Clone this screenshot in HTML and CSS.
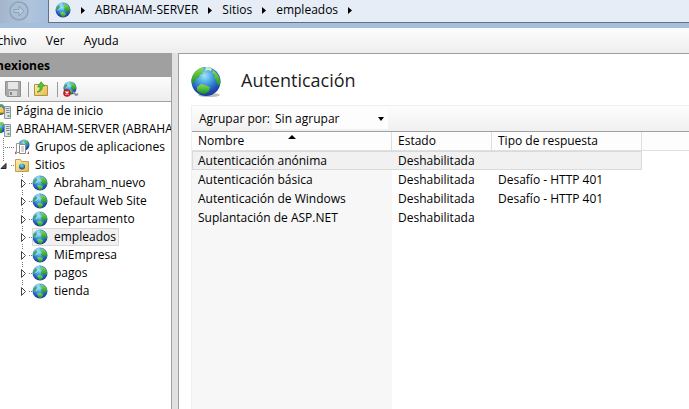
FILE: index.html
```html
<!DOCTYPE html>
<html lang="es">
<head>
<meta charset="utf-8">
<title>Autenticación</title>
<link rel="stylesheet" href="styles.css">
</head>
<body>
<svg class="defs" aria-hidden="true">
  <defs>
    <radialGradient id="sea" cx=".45" cy=".3" r=".75">
      <stop offset="0" stop-color="#9fe4fb"/><stop offset=".35" stop-color="#4aa6e2"/><stop offset=".7" stop-color="#2358c0"/><stop offset="1" stop-color="#1c2f8c"/>
    </radialGradient>
    <linearGradient id="land" x2="0" y2="1"><stop offset="0" stop-color="#8fdc4c"/><stop offset="1" stop-color="#159426"/></linearGradient>
    <linearGradient id="folder" x2="1" y2="1"><stop offset="0" stop-color="#fff2ae"/><stop offset="1" stop-color="#e2b94b"/></linearGradient>
    <symbol id="globe-large" viewBox="0 0 32 32">
      <ellipse cx="18" cy="29" rx="11" ry="2" fill="#000" opacity=".25"/>
      <circle cx="15" cy="15.500" r="14.500" fill="url(#sea)"/>
      <path d="M2 9C4 5 8 2 12 1.500l1 2-2 2 1 2-3 1-1 3-3 1-1 3-2 2-1.500-1C0 14 1 11 2 9z" fill="url(#land)"/>
      <path d="M15 1c3 0 5 1 6 2l-1 2-3-1-3 1z" fill="#c9f0c4"/>
      <path d="M22 4c4 3 7 7 7.500 12L28 20l-2-2-1-4-2-2 1-3-3-2z" fill="url(#land)"/>
      <path d="M6 21l4-3 4 1 2 1 3 1-1 4-4 3-5-1-3-3z" fill="url(#land)"/>
    </symbol>
    <symbol id="globe" viewBox="0 0 16 16">
      <circle cx="8" cy="8" r="7.500" fill="url(#sea)"/>
      <path d="M1.500 5C3 2 5 1 7.500.800l.5 1.700L6 4l.5 2-2 2L2 8.500z" fill="#a5def2" opacity=".7"/>
      <path d="M1 6l3-3 1 2-2 3H1z" fill="#3fa564"/>
      <path d="M9 1.500c3 .5 5 2.500 6 5L14.500 10l-2-1-1 1L9 8l1-3-1.500-1z" fill="url(#land)"/>
      <path d="M5 10.500l3-.5 3 1.500-1 3L7.500 15 6 13z" fill="url(#land)"/>
    </symbol>
    <symbol id="server" viewBox="0 0 16 16">
      <circle cx="5" cy="6.500" r="5.500" fill="url(#sea)"/>
      <path d="M4 1l4 0 1 2-2 2-2-1zM4 8l3-1v4l-2 1z" fill="url(#land)"/>
      <path d="M9.500 3.500h6v12h-6z" fill="#dfe4e8" stroke="#8c969d"/>
      <path d="M11 5.500h3.500M11 7.500h3.500M11 9.500h3.500" stroke="#7f8b93"/>
      <path d="M12.500 12h2v2h-2z" fill="#55b64a"/>
    </symbol>
    <symbol id="home" viewBox="0 0 16 16">
      <use href="#server"/>
      <path d="M3 6l3-3 3 3v4H3z" fill="#f6c955" stroke="#b77b20"/>
      <path d="M2 6l4-4 4 4" fill="none" stroke="#338fd0" stroke-width="1.500"/>
    </symbol>
    <symbol id="lead" viewBox="0 0 32 18">
      <path d="M22.500 0v4M22.500 16v2M29 9.500h3" stroke="#777" stroke-dasharray="1 1"/>
      <path d="M21.500 5.500v8l4-4z" fill="#fff" stroke="#444"/>
    </symbol>
    <symbol id="lead-last" viewBox="0 0 32 18">
      <path d="M22.500 0v4M29 9.500h3" stroke="#777" stroke-dasharray="1 1"/>
      <path d="M21.500 5.500v8l4-4z" fill="#fff" stroke="#444"/>
    </symbol>
    <symbol id="arrow" viewBox="0 0 4 7"><path d="M0 0v7l4-3.500z"/></symbol>
  </defs>
</svg>

<header class="topbar">
  <div class="nav">
    <button class="forward" aria-label="Adelante">
      <svg width="22" height="22" viewBox="0 0 22 22"><circle cx="11" cy="11" r="9" fill="#a9bfd6" stroke="#90a3b8" stroke-width="1.500"/><path d="M6 9.500h5V6l5 5-5 5v-3.500H6z" fill="#b6c9dd" stroke="#8fa2b7"/></svg>
    </button>
  </div>
  <nav class="address" aria-label="Ruta">
    <svg class="icon"><use href="#globe"/></svg>
    <svg class="arrow"><use href="#arrow"/></svg>
    <a href="#server">ABRAHAM-SERVER</a>
    <svg class="arrow"><use href="#arrow"/></svg>
    <a href="#sitios">Sitios</a>
    <svg class="arrow"><use href="#arrow"/></svg>
    <a href="#empleados">empleados</a>
    <svg class="arrow"><use href="#arrow"/></svg>
  </nav>
</header>

<div class="menu">
  <button>Archivo</button>
  <button>Ver</button>
  <button>Ayuda</button>
</div>

<main class="workspace">
  <aside class="connections">
    <h2>Conexiones</h2>
    <div class="tools">
      <button aria-label="Guardar"><svg width="16" height="16" viewBox="0 0 16 16"><path d="M.5.500h15v15H2l-1.500-1.500z" fill="#a9a9a9" stroke="#8f8f8f"/><path d="M3 1h10v7H3z" fill="#e6e6e6"/><path d="M4 10h8v5H4z" fill="#d4d4d4"/><path d="M5 11h2v3H5z" fill="#888"/></svg></button>
      <i class="divider"></i>
      <button aria-label="Subir"><svg width="16" height="16" viewBox="0 0 16 16"><path d="M.5 3.500h5l1 1h7v10H.5z" fill="url(#folder)" stroke="#b59243"/><path d="M3 11c3-1 3-3 3-5H3.500L7 .8 11 5H8.500c0 4-2 6-5.500 6z" fill="#55c232" stroke="#37861f" stroke-width=".6"/></svg></button>
      <i class="divider"></i>
      <button aria-label="Desconectar"><svg width="16" height="16" viewBox="0 0 16 16"><use href="#globe" width="14" height="14"/><path d="M10 11l3 3 2-1" fill="none" stroke="#8d969c" stroke-width="2"/><circle cx="4" cy="12" r="3.800" fill="#c01f24"/><path d="M2.500 10.500l3 3m0-3l-3 3" stroke="#fff" stroke-width="1.300"/></svg></button>
    </div>
    <ul class="tree">
      <li class="root"><svg class="icon"><use href="#home"/></svg><span>Página de inicio</span></li>
      <li class="root"><svg class="icon"><use href="#server"/></svg><span>ABRAHAM-SERVER (ABRAHAM-SERVER\Administrador)</span></li>
      <li>
        <svg width="14" height="18"><path d="M3.500 0v18M5 9.500h9" stroke="#777" stroke-dasharray="1 1"/></svg>
        <svg class="icon" viewBox="0 0 16 16"><circle cx="10" cy="6" r="5.500" fill="url(#sea)"/><path d="M9 1l4 1 2 4-3-1z" fill="url(#land)"/><path d="M1 12l2 3h10l2-3v3H1z" fill="#c14a43"/><path d="M2.500 4.500h6v9h-6z" fill="#fff" stroke="#999"/><path d="M5.500 5.500h6v9h-6z" fill="#fff" stroke="#8a8a8a"/><path d="M7 8h3M7 10h3M7 12h3" stroke="#a8adb3"/></svg>
        <span>Grupos de aplicaciones</span>
      </li>
      <li>
        <svg width="14" height="18"><path d="M3.500 0v5M11 9.500h3" stroke="#777" stroke-dasharray="1 1"/><path d="M6 7.500v5H1z" fill="#555" stroke="#222"/></svg>
        <svg class="icon" viewBox="0 0 16 16"><path d="M1.500 2.500h5l1 2h7v10h-13z" fill="url(#folder)" stroke="#c4a04e"/><circle cx="8" cy="9.500" r="3" fill="url(#sea)"/><path d="M6 9l2-1.500v2zM8 11l2-2-.5 3z" fill="url(#land)"/></svg>
        <span>Sitios</span>
      </li>
      <li><svg class="lead"><use href="#lead"/></svg><a href="#abraham"><svg class="icon"><use href="#globe"/></svg><span>Abraham_nuevo</span></a></li>
      <li><svg class="lead"><use href="#lead"/></svg><a href="#default"><svg class="icon"><use href="#globe"/></svg><span>Default Web Site</span></a></li>
      <li><svg class="lead"><use href="#lead"/></svg><a href="#departamento"><svg class="icon"><use href="#globe"/></svg><span>departamento</span></a></li>
      <li><svg class="lead"><use href="#lead"/></svg><a href="#empleados" class="selected"><svg class="icon"><use href="#globe"/></svg><span>empleados</span></a></li>
      <li><svg class="lead"><use href="#lead"/></svg><a href="#miempresa"><svg class="icon"><use href="#globe"/></svg><span>MiEmpresa</span></a></li>
      <li><svg class="lead"><use href="#lead"/></svg><a href="#pagos"><svg class="icon"><use href="#globe"/></svg><span>pagos</span></a></li>
      <li><svg class="lead"><use href="#lead-last"/></svg><a href="#tienda"><svg class="icon"><use href="#globe"/></svg><span>tienda</span></a></li>
    </ul>
  </aside>

  <section class="content">
    <div class="title">
      <svg width="32" height="32"><use href="#globe-large"/></svg>
      <h1>Autenticación</h1>
    </div>
    <div class="panel">
      <div class="group">
        <label for="group">Agrupar por:</label>
        <div class="picker">
          <select id="group"><option>Sin agrupar</option></select>
          <svg width="6" height="4"><path d="M0 0h6L3 4z"/></svg>
        </div>
      </div>
      <div class="list">
        <table>
          <colgroup><col class="name"><col class="state"><col class="type"><col></colgroup>
          <thead><tr><th aria-sort="ascending">Nombre<svg class="sort" width="8" height="4"><path d="M0 4h8L4 0z"/></svg></th><th>Estado</th><th>Tipo de respuesta</th><td></td></tr></thead>
          <tbody>
            <tr class="current"><td>Autenticación anónima</td><td>Deshabilitada</td><td></td><td></td></tr>
            <tr><td>Autenticación básica</td><td>Deshabilitada</td><td>Desafío - HTTP 401</td><td></td></tr>
            <tr><td>Autenticación de Windows</td><td>Deshabilitada</td><td>Desafío - HTTP 401</td><td></td></tr>
            <tr><td>Suplantación de ASP.NET</td><td>Deshabilitada</td><td></td><td></td></tr>
          </tbody>
        </table>
      </div>
    </div>
  </section>
</main>
</body>
</html>
```
FILE: styles.css
```css
* { box-sizing: border-box; }
body {
  margin: 0;
  height: 100vh;
  display: flex;
  flex-direction: column;
  overflow: hidden;
  background: #e1e1e1;
  color: #000;
  font: 12px/18px "Segoe UI", "Open Sans", "Noto Sans", sans-serif;
}
svg { display: block; flex: none; }
a { color: inherit; text-decoration: none; }
button { border: 0; padding: 0; background: none; font: inherit; color: inherit; }
.defs { position: absolute; width: 0; height: 0; }
.icon { width: 16px; height: 16px; }

.topbar { flex: none; display: flex; height: 28px; background: #a5bedb; }
.nav { width: 48px; height: 23px; padding-left: 8px; background: linear-gradient(90deg, #a3b6cb, #afc4dc 60%, #a5bedb); border-radius: 0 0 12px 0; }
.address {
  flex: 1;
  display: flex;
  align-items: center;
  gap: 10px;
  height: 23px;
  padding: 0 6px 2px;
  background: #e6edf6;
  border-left: 1px solid #66717d;
  border-bottom: 1px solid #66717d;
}
.arrow { width: 4px; height: 7px; }

.menu {
  flex: none;
  display: flex;
  gap: 19px;
  height: 25px;
  padding-left: 1px;
  margin-left: -16px;
  background: linear-gradient(#fdfdfd, #eee);
}

.workspace { flex: 1; display: flex; gap: 6px; min-height: 0; }
.connections {
  flex: 0 0 172px;
  display: flex;
  flex-direction: column;
  overflow: hidden;
  background: #fff;
  border-right: 1px solid #a0a0a0;
}
h2 {
  margin: 0;
  text-indent: -19px;
  height: 24px;
  flex: none;
  background: #a0a0a0;
  font-size: 12px;
  line-height: 26px;
}
.tools {
  flex: none;
  display: flex;
  align-items: center;
  gap: 4px;
  height: 25px;
  padding-left: 5px;
  background: linear-gradient(#fcfcfc, #ededed);
  border-bottom: 1px solid #a0a0a0;
}
.divider { width: 1px; height: 15px; margin: 0 1px 0 3px; background: #9a9a9a; }

.tree { margin: 0; padding: 0; list-style: none; white-space: nowrap; }
.tree li, .tree a { display: flex; align-items: center; height: 18px; }
.tree span { padding: 0 3px 0 5px; }
.tree .root { margin-left: -5px; }
.lead { width: 32px; height: 18px; }
.tree a span { padding-left: 6px; }
.selected { background: #f0f0f0; outline: 1px solid #d9d9d9; outline-offset: -1px; }

.content {
  flex: 1;
  min-width: 0;
  display: flex;
  flex-direction: column;
  padding-left: 12px;
  background: #fff;
  border-left: 1px solid #a0a0a0;
  border-top: 1px solid #a0a0a0;
}
.title { flex: none; display: flex; align-items: center; gap: 18px; height: 51px; }
.title > svg { margin-top: 4px; }
h1 { margin: 0; font-size: 18px; font-weight: 400; line-height: 28px; color: #1c1c1c; }
.panel { flex: 1; display: flex; flex-direction: column; border: 1px solid #f0f0f0; border-width: 1px 0 0 1px; }
.group {
  flex: none;
  display: flex;
  align-items: center;
  gap: 2px;
  height: 26px;
  padding-left: 7px;
  background: linear-gradient(#fdfdfd, #f0f0f0);
  border-bottom: 1px solid #a0a0a0;
}
.picker { display: grid; align-items: center; width: 116px; height: 21px; background: #fdfdfd; }
.picker > * { grid-area: 1 / 1; }
.picker svg { justify-self: end; margin-right: 4px; pointer-events: none; }
select { appearance: none; width: 100%; height: 21px; border: 0; padding: 0 3px; background: none; font: inherit; color: inherit; }

.list { flex: 1; background: linear-gradient(#f7f7f7, #f7f7f7) 0 0 / 200px 100% no-repeat; }
table { width: 100%; table-layout: fixed; border-collapse: separate; border-spacing: 0; }
.name { width: 200px; }
.state { width: 100px; }
.type { width: 150px; }
th, td { height: 19px; padding: 0 6px; font-weight: 400; text-align: left; line-height: 18px; white-space: nowrap; }
th { position: relative; border-right: 1px solid #dedede; }
thead th, thead td { background: #fdfdfd; border-bottom: 1px solid #e0e0e0; }
.sort { position: absolute; top: 3px; left: calc(50% - 4px); }
.current td:not(:last-child) { background: #f1f1f1; border: 1px solid #dadada; border-width: 1px 0; line-height: 17px; }
.current td:first-child { border-left-width: 1px; padding-left: 5px; }
.current td:nth-child(3) { border-right-width: 1px; }
```
